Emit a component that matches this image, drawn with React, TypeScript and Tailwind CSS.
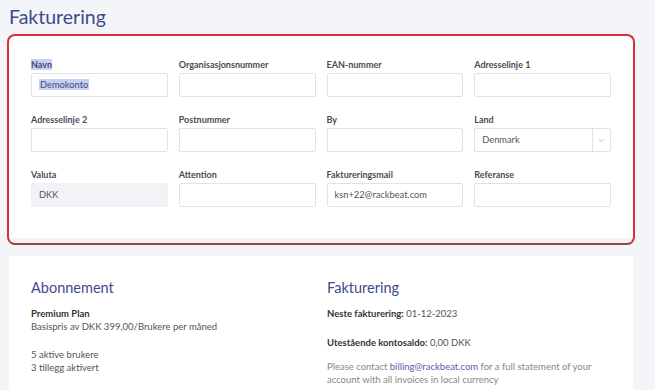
import { ChevronDown } from "lucide-react";

const font = { fontFamily: "Lato, 'Open Sans', sans-serif" };

function Field({ label, value, disabled, select, highlight }: { label: string; value?: string; disabled?: boolean; select?: boolean; highlight?: boolean }) {
	return (
		<div className="flex flex-col">
			<div className="h-[13px] text-[9px] leading-[13px] font-bold text-[#4b4b55]">
				{highlight ? <span className="bg-[#c9d0ee] text-[#3f4a86]">{label}</span> : label}
			</div>
			<div
				className={
					"mt-[2px] h-[24px] rounded-[2px] border flex items-center text-[9.3px] text-[#555] " +
					(disabled ? "bg-[#f1f3f7] border-[#eef0f4]" : "bg-white border-[#dfe2e8]")
				}
			>
				<span className="pl-[7px] flex-1">
					{highlight ? <span className="bg-[#c9d0ee] text-[#3f4a86] px-[1px]">{value}</span> : value}
				</span>
				{select && (
					<div className="h-full w-[18px] border-l border-[#dfe2e8] flex items-center justify-center text-[#999]">
						<ChevronDown size={9} strokeWidth={1.5} />
					</div>
				)}
			</div>
		</div>
	);
}

export default function App() {
	return (
		<div className="w-[655px] h-[390px] overflow-hidden bg-[#f4f5f9] px-[7px]" style={font}>
			<h1 className="pt-[3px] pl-[2px] h-[34px] text-[19.5px] leading-[28px] text-[#3f4a8a]">Fakturering</h1>

			<div className="w-[628px] rounded-[8px] border-2 border-[#d92f3a] border-b-[#8f4a3a] bg-[linear-gradient(to_bottom,#ffffff_calc(100%-5px),#fdeff8_calc(100%-5px))] px-[22px] pt-[22px] pb-[36px]">
				<div className="grid grid-cols-4 gap-x-[11px] gap-y-[16px]">
					<Field label="Navn" value="Demokonto" highlight />
					<Field label="Organisasjonsnummer" />
					<Field label="EAN-nummer" />
					<Field label="Adresselinje 1" />
					<Field label="Adresselinje 2" />
					<Field label="Postnummer" />
					<Field label="By" />
					<Field label="Land" value="Denmark" select />
					<Field label="Valuta" value="DKK" disabled />
					<Field label="Attention" />
					<Field label="Faktureringsmail" value="ksn+22@rackbeat.com" />
					<Field label="Referanse" />
				</div>
			</div>

			<div className="mt-[11px] ml-[2px] w-[624px] h-[200px] rounded-[3px] bg-white px-[22px] pt-[22px] grid grid-cols-[296px_1fr] text-[9.5px] text-[#555]">
				<div>
					<h2 className="text-[14.5px] leading-[20px] text-[#3f4a8a]">Abonnement</h2>
					<div className="mt-[9px] font-bold text-[#333] leading-[13px]">Premium Plan</div>
					<div className="leading-[13px]">Basispris av DKK 399,00/Brukere per måned</div>
					<div className="mt-[16px] leading-[12.5px]">5 aktive brukere</div>
					<div className="leading-[12.5px]">3 tillegg aktivert</div>
				</div>
				<div>
					<h2 className="text-[14.5px] leading-[20px] text-[#3f4a8a]">Fakturering</h2>
					<div className="mt-[9px] leading-[13px]">
						<span className="font-bold text-[#333]">Neste fakturering:</span> 01-12-2023
					</div>
					<div className="mt-[16px] leading-[13px]">
						<span className="font-bold text-[#333]">Utestående kontosaldo:</span> 0,00 DKK
					</div>
					<p className="mt-[11px] w-[282px] leading-[13px] text-[#888]">
						Please contact <span className="text-[#5b60a8]">billing@rackbeat.com</span> for a full statement of your account with all invoices in local currency
					</p>
				</div>
			</div>
		</div>
	);
}
